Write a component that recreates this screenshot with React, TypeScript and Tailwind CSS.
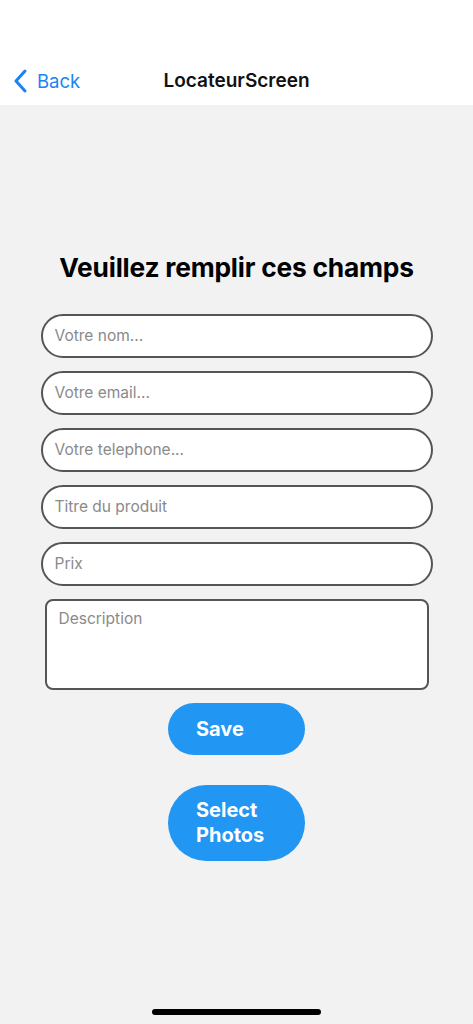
import React from "react";

export default function App() {
  const fields = ["Votre nom...", "Votre email...", "Votre telephone...", "Titre du produit", "Prix"];
  return (
    <div
      className="w-[473px] h-[1024px] bg-[#f2f2f2] flex flex-col relative overflow-hidden"
      style={{ fontFamily: "Inter, 'Noto Sans', sans-serif" }}
    >
      <div className="h-[105px] bg-white flex items-end pb-[11px] relative">
        <div className="flex items-center pl-[13px] gap-[8px] text-[#1a84f5]">
          <svg width="16" height="24" viewBox="0 0 16 24" fill="none">
            <path d="M12 2 L3 12 L12 22" stroke="#1a84f5" strokeWidth="3" strokeLinecap="round" strokeLinejoin="round" />
          </svg>
          <span className="text-[18.5px] leading-[26px]">Back</span>
        </div>
        <div className="absolute left-0 right-0 bottom-[11px] text-center text-[19px] leading-[26px] font-semibold text-[#111]">
          LocateurScreen
        </div>
      </div>

      <div className="flex flex-col items-center pt-[146px]">
        <h1 className="text-[26.3px] leading-[34px] font-bold text-black tracking-[-0.2px]">Veuillez remplir ces champs</h1>
        <div className="mt-[29px] flex flex-col gap-[13px] w-[392px]">
          {fields.map((f) => (
            <div
              key={f}
              className="h-[44px] rounded-full border-2 border-[#555] bg-white flex items-center pl-[12px] text-[15.5px] text-[#8a8a8a]"
            >
              {f}
            </div>
          ))}
        </div>
        <div className="mt-[13px] w-[384px] h-[91px] rounded-[8px] border-2 border-[#555] bg-white pl-[12px] pt-[6px] text-[15.5px] text-[#8a8a8a]">
          Description
        </div>
        <div className="mt-[13px] w-[137px] h-[52px] rounded-full bg-[#2196f3] flex items-center pl-[28px] text-white font-bold text-[20px]">
          Save
        </div>
        <div className="mt-[30px] w-[137px] h-[76px] rounded-full bg-[#2196f3] flex items-center pl-[28px] text-white font-bold text-[20px] leading-[25px]">
          <span>Select<br />Photos</span>
        </div>
      </div>

      <div className="absolute bottom-[9px] left-[152px] w-[169px] h-[6px] rounded-full bg-black" />
    </div>
  );
}
